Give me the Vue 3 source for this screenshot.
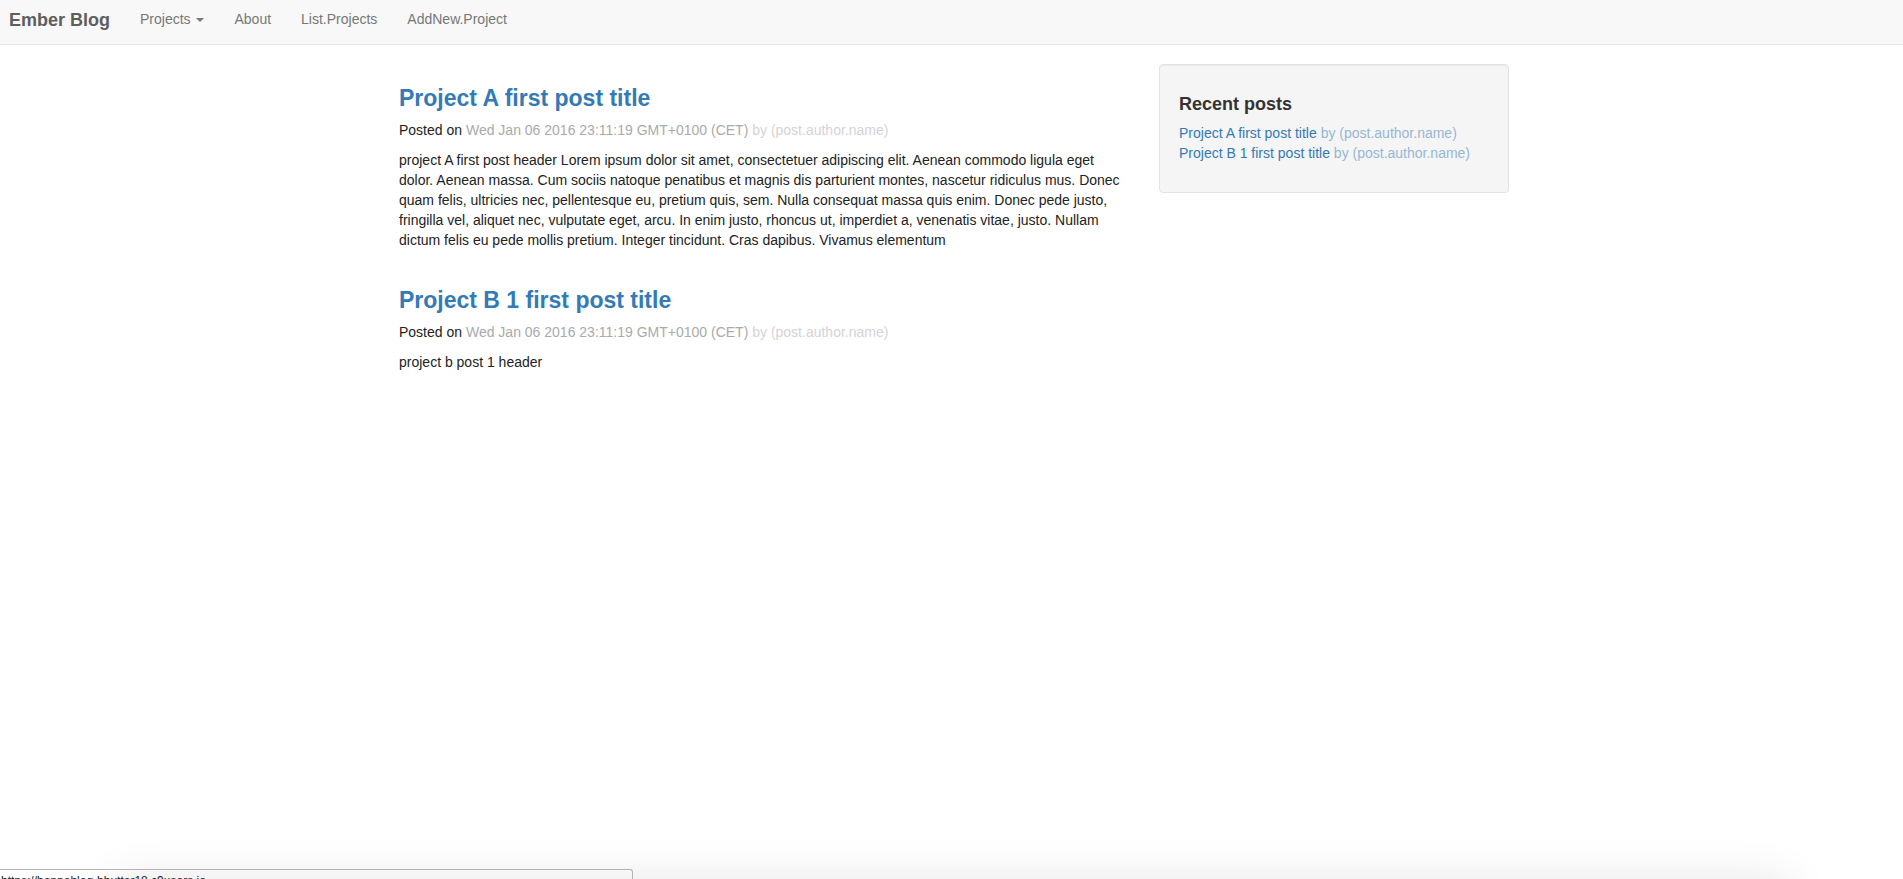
<script setup>
const links = ['About', 'List.Projects', 'AddNew.Project']

const author = '(post.author.name)'
const posts = [
  {
    title: 'Project A first post title',
    date: 'Wed Jan 06 2016 23:11:19 GMT+0100 (CET)',
    header:
      'project A first post header Lorem ipsum dolor sit amet, consectetuer adipiscing elit. Aenean commodo ligula eget dolor. Aenean massa. Cum sociis natoque penatibus et magnis dis parturient montes, nascetur ridiculus mus. Donec quam felis, ultricies nec, pellentesque eu, pretium quis, sem. Nulla consequat massa quis enim. Donec pede justo, fringilla vel, aliquet nec, vulputate eget, arcu. In enim justo, rhoncus ut, imperdiet a, venenatis vitae, justo. Nullam dictum felis eu pede mollis pretium. Integer tincidunt. Cras dapibus. Vivamus elementum',
  },
  {
    title: 'Project B 1 first post title',
    date: 'Wed Jan 06 2016 23:11:19 GMT+0100 (CET)',
    header: 'project b post 1 header',
  },
]
</script>

<template>
  <div class="page">
    <nav class="navbar">
      <a class="brand" href="#">Ember Blog</a>
      <button class="nav-item" type="button" aria-haspopup="true">
        Projects <span class="caret"></span>
      </button>
      <a v-for="link in links" :key="link" class="nav-item" href="#">{{ link }}</a>
    </nav>

    <div class="content">
      <main>
        <article v-for="post in posts" :key="post.title" class="post">
          <h2><a href="#">{{ post.title }}</a></h2>
          <p>
            Posted on
            <span class="date">{{ post.date }} <span class="author">by {{ author }}</span></span>
          </p>
          <p>{{ post.header }}</p>
        </article>
      </main>

      <aside class="well">
        <h3>Recent posts</h3>
        <ul>
          <li v-for="post in posts" :key="post.title">
            <a href="#">{{ post.title }} <span class="author">by {{ author }}</span></a>
          </li>
        </ul>
      </aside>
    </div>

    <div class="shade"></div>
    <div class="status">https://hannoblog-hbutter18.c9users.io</div>
  </div>
</template>

<style>
body {
  margin: 0;
}
</style>

<style scoped>
.page {
  position: relative;
  min-height: 100vh;
  overflow: hidden;
  background: #fff;
  color: #222;
  font: 14px/20px "Helvetica Neue", "Liberation Sans", Arial, sans-serif;
}
a {
  color: #337ab7;
  text-decoration: none;
}
.navbar {
  display: flex;
  align-items: flex-start;
  min-height: 44px;
  background: #f8f8f8;
  border-bottom: 1px solid #e7e7e7;
}
.brand {
  padding: 10px 15px 14px 9px;
  color: #5e5e5e;
  font-size: 18px;
  font-weight: bold;
}
.nav-item {
  padding: 9px 15px 15px;
  border: 0;
  background: none;
  color: #777;
  font: inherit;
}
.caret {
  display: inline-block;
  margin-left: 2px;
  vertical-align: middle;
  border-top: 4px solid;
  border-left: 4px solid transparent;
  border-right: 4px solid transparent;
}
.content {
  display: grid;
  grid-template-columns: minmax(0, 730px) minmax(0, 350px);
  gap: 30px;
  align-items: start;
  justify-content: center;
  padding: 19px 15px 20px 20px;
}
.post {
  padding-top: 21px;
  margin-bottom: 37px;
}
.post + .post {
  padding-top: 0;
}
h2 {
  margin: 0 0 9px;
  font-size: 23px;
  line-height: 26px;
  font-weight: bold;
}
p {
  margin: 0 0 10px;
}
.date {
  color: #aaa;
}
.author {
  opacity: 0.5;
}
.well {
  box-sizing: border-box;
  padding: 29px 19px;
  border: 1px solid #e3e3e3;
  border-radius: 4px;
  background: #f5f5f5;
  box-shadow: inset 0 1px 1px rgba(0, 0, 0, 0.05);
}
h3 {
  margin: 0 0 9px;
  color: #333;
  font-size: 18px;
  line-height: 20px;
  font-weight: bold;
}
ul {
  margin: 0;
  padding: 0;
  list-style: none;
}
.shade {
  position: absolute;
  top: 100%;
  left: 6%;
  right: 6%;
  height: 60px;
  box-shadow: 0 0 44px rgba(0, 0, 0, 0.1);
}
.status {
  position: absolute;
  box-sizing: border-box;
  left: 0;
  bottom: 0;
  width: 633px;
  max-width: 100%;
  height: 10px;
  padding: 3px 1px 0;
  overflow: hidden;
  border: solid #b4b4b4;
  border-width: 1px 1px 0 0;
  border-radius: 0 3px 0 0;
  color: #222;
  font-size: 12px;
  line-height: 16px;
}
</style>
